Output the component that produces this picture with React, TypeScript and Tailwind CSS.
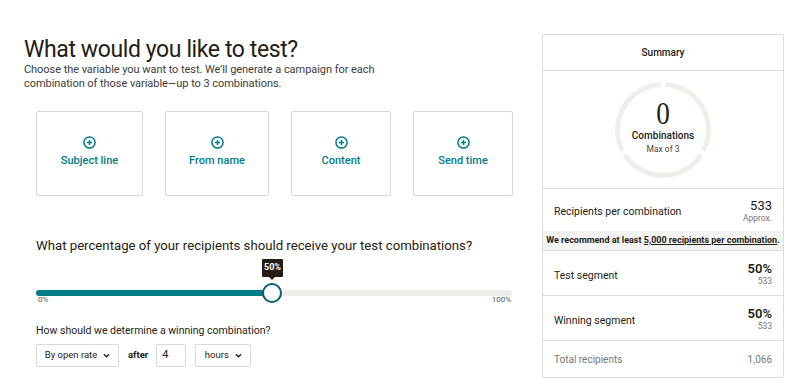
import React from "react";

function PlusCircle() {
  return (
    <svg width="13" height="13" viewBox="0 0 14 14" fill="none">
      <circle cx="7" cy="7" r="6" stroke="#007c89" strokeWidth="1.6" />
      <path d="M7 4.2v5.6M4.2 7h5.6" stroke="#007c89" strokeWidth="1.6" />
    </svg>
  );
}

function Chevron() {
  return (
    <svg width="7" height="5" viewBox="0 0 8 5" fill="none">
      <path d="M1 1l3 3 3-3" stroke="#241c15" strokeWidth="1.5" />
    </svg>
  );
}

function Ring() {
  const cx = 50, cy = 50, r = 45.5;
  const arc = (a1: number, a2: number) => {
    const rad = (a: number) => ((a - 90) * Math.PI) / 180;
    const x1 = cx + r * Math.cos(rad(a1));
    const y1 = cy + r * Math.sin(rad(a1));
    const x2 = cx + r * Math.cos(rad(a2));
    const y2 = cy + r * Math.sin(rad(a2));
    return `M${x1} ${y1} A${r} ${r} 0 0 1 ${x2} ${y2}`;
  };
  return (
    <svg width="100" height="100" viewBox="0 0 100 100" className="absolute inset-0">
      <path d={arc(3, 117)} stroke="#efeeea" strokeWidth="5" fill="none" />
      <path d={arc(123, 237)} stroke="#efeeea" strokeWidth="5" fill="none" />
      <path d={arc(243, 357)} stroke="#efeeea" strokeWidth="5" fill="none" />
    </svg>
  );
}

const cards = [
  { label: "Subject line", w: "w-[107px]" },
  { label: "From name", w: "w-[104px]" },
  { label: "Content", w: "w-[100px]" },
  { label: "Send time", w: "w-[100px]" },
];

export default function App() {
  return (
    <div className="w-[800px] h-[390px] bg-white flex text-[#241c15] font-['Roboto','Liberation_Sans',sans-serif] overflow-hidden">
      <div className="w-[518px] pl-6 pt-[37px]">
        <h1 className="text-[23px] leading-[26px] font-normal tracking-[-0.4px]">What would you like to test?</h1>
        <p className="text-[11px] leading-[14px] text-[#3c3c3c] tracking-[-0.05px]">
          Choose the variable you want to test. We’ll generate a campaign for each
          <br />
          combination of those variable—up to 3 combinations.
        </p>
        <div className="pl-3 mt-[20px] flex gap-[22px]">
          {cards.map((c) => (
            <div
              key={c.label}
              className={`${c.w} h-[85px] border border-[#d9d9d9] rounded-[2px] flex flex-col items-center pt-[24px]`}
            >
              <PlusCircle />
              <div className="mt-[4px] text-[11px] font-medium text-[#007c89]">{c.label}</div>
            </div>
          ))}
        </div>
        <div className="pl-3">
          <div className="mt-[41px] text-[13.2px] leading-[18px]">
            What percentage of your recipients should receive your test combinations?
          </div>
          <div className="relative h-[50px] w-[476px]">
            <div className="absolute left-0 right-0 top-[35px] h-[6px] rounded-full bg-[#efeeea]" />
            <div className="absolute left-0 w-[236px] top-[35px] h-[6px] rounded-l-full bg-[#007c89]" />
            <div className="absolute left-[226px] top-[28px] w-[20px] h-[20px] rounded-full bg-white border-2 border-[#0d5c66]" />
            <div className="absolute left-[226px] top-[4px] w-[21px] h-[18px] bg-[#241c15] text-white text-[9px] font-bold flex items-center justify-center rounded-[1px]">
              50%
              <div className="absolute left-[7px] bottom-[-3px] w-0 h-0 border-l-[3px] border-r-[3px] border-t-[3px] border-l-transparent border-r-transparent border-t-[#241c15]" />
            </div>
            <div className="absolute left-[2px] top-[40px] text-[8px] leading-[10px] text-[#555]">0%</div>
            <div className="absolute right-[1px] top-[40px] text-[8px] leading-[10px] text-[#555]">100%</div>
          </div>
          <div className="mt-[19px] text-[10.5px] leading-[14px]">How should we determine a winning combination?</div>
          <div className="mt-[6px] flex items-center">
            <div className="w-[83px] h-[23px] border border-[#d9d9d9] rounded-[2px] flex items-center justify-center gap-[6px] text-[9.5px]">
              By open rate <Chevron />
            </div>
            <div className="ml-[9px] text-[9.5px] font-bold">after</div>
            <div className="ml-[8px] w-[30px] h-[23px] border border-[#d9d9d9] rounded-[2px] flex items-center pl-[5px] text-[11px]">4</div>
            <div className="ml-[9px] w-[56px] h-[23px] border border-[#d9d9d9] rounded-[2px] flex items-center justify-center gap-[6px] text-[9.5px]">
              hours <Chevron />
            </div>
          </div>
        </div>
      </div>

      <div className="ml-[24px] mt-[34px] w-[242px] h-[344px] border border-[#dcdcdc] rounded-[2px] flex flex-col">
        <div className="h-[36px] border-b border-[#dcdcdc] flex items-center justify-center text-[10px] font-medium">Summary</div>
        <div className="h-[117px] flex items-center justify-center">
          <div className="relative w-[100px] h-[100px]">
            <Ring />
            <div className="absolute inset-0 flex flex-col items-center pt-[19px]">
              <div className="text-[32px] leading-[28px] font-['Liberation_Serif',serif] scale-x-[0.85]">0</div>
              <div className="mt-[2px] text-[10px] font-medium leading-[13px]">Combinations</div>
              <div className="mt-[1px] text-[8.5px] leading-[12px] text-[#444]">Max of 3</div>
            </div>
          </div>
        </div>
        <div className="h-[43px] border-t border-[#dcdcdc] flex items-center justify-between px-[11px]">
          <div className="text-[10.5px] pt-[3px]">Recipients per combination</div>
          <div className="flex flex-col items-end pt-[1px]">
            <div className="text-[13px] leading-[15px]">533</div>
            <div className="text-[8.5px] leading-[10px] text-[#777]">Approx.</div>
          </div>
        </div>
        <div className="h-[19px] bg-[#f4f4f2] flex items-center justify-center text-[9px] font-bold whitespace-nowrap">
          We recommend at least&nbsp;<span className="underline">5,000 recipients per combination</span>.
        </div>
        <div className="h-[45px] border-t border-[#dcdcdc] flex items-center justify-between px-[11px]">
          <div className="text-[10.5px] pt-[5px]">Test segment</div>
          <div className="flex flex-col items-end">
            <div className="text-[13px] leading-[15px] font-semibold">50%</div>
            <div className="text-[8.5px] leading-[10px] text-[#777]">533</div>
          </div>
        </div>
        <div className="h-[45px] border-t border-[#dcdcdc] flex items-center justify-between px-[11px]">
          <div className="text-[10.5px] pt-[5px]">Winning segment</div>
          <div className="flex flex-col items-end">
            <div className="text-[13px] leading-[15px] font-semibold">50%</div>
            <div className="text-[8.5px] leading-[10px] text-[#777]">533</div>
          </div>
        </div>
        <div className="flex-1 border-t border-[#dcdcdc] flex items-center justify-between px-[11px] text-[10px] text-[#777]">
          <div>Total recipients</div>
          <div>1,066</div>
        </div>
      </div>
    </div>
  );
}
